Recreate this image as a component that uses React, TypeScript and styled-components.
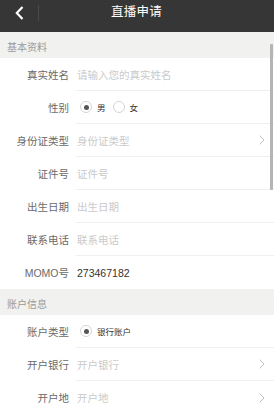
import React from "react";
import styled, { createGlobalStyle } from "styled-components";

const Global = createGlobalStyle`
  html, body { margin: 0; padding: 0; background: #fff; overflow: hidden; }
  body { font-family: "Liberation Sans", "Noto Sans CJK SC", sans-serif; }
  * { box-sizing: border-box; }
`;

const Page = styled.div`
  position: relative;
  width: 274px;
  height: 412px;
  overflow: hidden;
  background: #fff;
`;

const TopBar = styled.div`
  height: 32px;
  background: #363636;
  display: flex;
  align-items: flex-start;
  padding-top: 4px;
  position: relative;
`;

const BackBtn = styled.div`
  width: 39px;
  height: 16px;
  display: flex;
  align-items: center;
  justify-content: center;
  padding-left: 0px;
  border-right: 1px solid #4a4a4a;
  margin-top: 1px;
`;

const Title = styled.div`
  flex: 1;
  text-align: center;
  color: #fff;
  font-size: 12.5px;
  line-height: 17px;
  margin-left: -40px;
  padding-left: 0;
  letter-spacing: 0.3px;
`;

const SectionHead = styled.div`
  height: 26px;
  background: #f1f1ef;
  color: #9a9a9a;
  font-size: 10px;
  display: flex;
  align-items: center;
  padding-left: 7px;
  padding-top: 3px;
`;

const Row = styled.div`
  display: flex;
  height: 33px;
`;

const Label = styled.div`
  width: 76px;
  padding-right: 7px;
  text-align: right;
  color: #6a6a6a;
  font-size: 10.5px;
  display: flex;
  align-items: center;
  justify-content: flex-end;
  white-space: nowrap;
`;

const Field = styled.div<{ $last?: boolean }>`
  flex: 1;
  display: flex;
  align-items: center;
  padding-left: 1px;
  padding-right: 9px;
  border-bottom: ${(p) => (p.$last ? "none" : "1px solid #efefef")};
  font-size: 10.5px;
`;

const Placeholder = styled.span`
  color: #cacaca;
  flex: 1;
`;

const Value = styled.span`
  color: #333;
  flex: 1;
`;

const RadioGroup = styled.div`
  display: flex;
  align-items: center;
  gap: 0;
  flex: 1;
  padding-left: 3px;
`;

const RadioItem = styled.div`
  display: flex;
  align-items: center;
  margin-right: 7px;
`;

const Circle = styled.span<{ $on?: boolean }>`
  width: 12px;
  height: 12px;
  border-radius: 50%;
  border: 1px solid #d4d4d4;
  display: inline-flex;
  align-items: center;
  justify-content: center;
  margin-right: 5px;
  &::after {
    content: "";
    width: 5px;
    height: 5px;
    border-radius: 50%;
    background: ${(p) => (p.$on ? "#555" : "transparent")};
  }
`;

const RadioText = styled.span`
  font-size: 8.5px;
  color: #333;
`;

const Scrollbar = styled.div`
  position: absolute;
  right: 1px;
  top: 44px;
  width: 3px;
  height: 146px;
  background: #b4b4b4;
  border-radius: 1px;
`;

const Chevron = () => (
  <svg width="6" height="10" viewBox="0 0 6 10">
    <path d="M0.7 0.7 L5 5 L0.7 9.3" fill="none" stroke="#bdbdbd" strokeWidth="1" />
  </svg>
);

const BackIcon = () => (
  <svg width="9" height="14" viewBox="0 0 9 14">
    <path d="M7.5 1 L1.8 7 L7.5 13" fill="none" stroke="#fff" strokeWidth="2.2" />
  </svg>
);

type RowDef =
  | { label: string; kind: "text"; text: string; placeholder?: boolean; chevron?: boolean; last?: boolean }
  | { label: string; kind: "radio"; options: { t: string; on: boolean }[]; last?: boolean };

const basic: RowDef[] = [
  { label: "真实姓名", kind: "text", text: "请输入您的真实姓名", placeholder: true },
  { label: "性别", kind: "radio", options: [{ t: "男", on: true }, { t: "女", on: false }] },
  { label: "身份证类型", kind: "text", text: "身份证类型", placeholder: true, chevron: true },
  { label: "证件号", kind: "text", text: "证件号", placeholder: true },
  { label: "出生日期", kind: "text", text: "出生日期", placeholder: true },
  { label: "联系电话", kind: "text", text: "联系电话", placeholder: true },
  { label: "MOMO号", kind: "text", text: "273467182", last: true },
];

const account: RowDef[] = [
  { label: "账户类型", kind: "radio", options: [{ t: "银行账户", on: true }] },
  { label: "开户银行", kind: "text", text: "开户银行", placeholder: true, chevron: true },
  { label: "开户地", kind: "text", text: "开户地", placeholder: true, chevron: true, last: true },
];

const FormRow = ({ r }: { r: RowDef }) => (
  <Row>
    <Label>{r.label}</Label>
    <Field $last={r.last}>
      {r.kind === "radio" ? (
        <RadioGroup>
          {r.options.map((o) => (
            <RadioItem key={o.t}>
              <Circle $on={o.on} />
              <RadioText>{o.t}</RadioText>
            </RadioItem>
          ))}
        </RadioGroup>
      ) : r.placeholder ? (
        <Placeholder>{r.text}</Placeholder>
      ) : (
        <Value>{r.text}</Value>
      )}
      {r.kind === "text" && r.chevron ? <Chevron /> : null}
    </Field>
  </Row>
);

export default function App() {
  return (
    <Page>
      <Global />
      <TopBar>
        <BackBtn>
          <BackIcon />
        </BackBtn>
        <Title>直播申请</Title>
      </TopBar>
      <SectionHead>基本资料</SectionHead>
      {basic.map((r) => (
        <FormRow key={r.label} r={r} />
      ))}
      <SectionHead>账户信息</SectionHead>
      {account.map((r) => (
        <FormRow key={r.label} r={r} />
      ))}
      <Scrollbar />
    </Page>
  );
}
